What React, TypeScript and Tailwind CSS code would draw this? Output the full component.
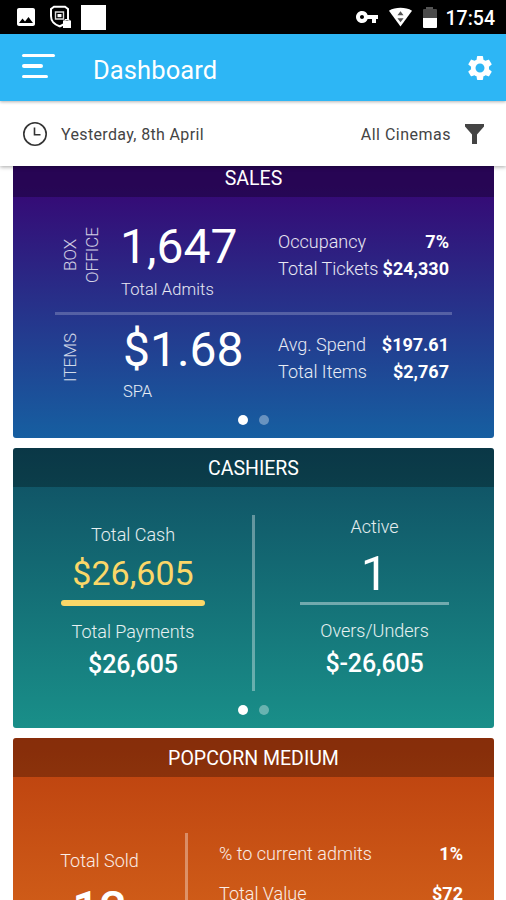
import type { ReactNode } from "react";
import { MdImage, MdSettings, MdVpnKey } from "react-icons/md";

function StatusBar() {
  return (
    <div className="flex h-[34px] shrink-0 items-center justify-between bg-black pl-[14px] pr-[11px] text-white">
      <div className="flex items-center">
        <MdImage className="size-6" />
        <svg className="ml-[10px] size-6" viewBox="0 0 24 24" fill="none" stroke="currentColor" strokeWidth="2">
          <path d="M12 21.500C5 19 3 16 3 11V4l3-2.200h11L20 4v10" />
          <path d="M7.500 7h8v7h-8z" stroke="#ddd" strokeWidth="1.400" />
          <path d="M9.500 9h4v3.200h-4z" fill="#fff" stroke="none" />
          <path d="M11.500 21.500l4-2" />
          <path d="M16 16.500h6V22h-6z" fill="#fff" />
          <path d="M17 16v-1.500h4V16" strokeWidth="1" />
        </svg>
        <div className="ml-[9px] mt-px size-[25px] bg-white" />
      </div>
      <div className="flex items-center">
        <MdVpnKey className="size-6" />
        <svg className="ml-[9px] h-5 w-[25px]" viewBox="0 0 26 20">
          <path d="M1 3.500C8-.5 18-.5 25 3.500L13 20z" fill="#fff" />
          <path d="M13 4l3.200 4.300H9.800zM13 15.500l3.200-4.300H9.800z" fill="#555" />
        </svg>
        <div className="ml-[10px] flex flex-col items-center">
          <div className="h-[2px] w-[7px] bg-[#555]" />
          <div className="h-[9px] w-[14px] rounded-t-[1px] bg-[#4b4b4b]" />
          <div className="h-[10px] w-[14px] rounded-b-[1px] bg-white" />
        </div>
        <span className="ml-[9px] mt-[3px] text-[19.500px] font-medium leading-6">17:54</span>
      </div>
    </div>
  );
}

function AppBar() {
  return (
    <div className="z-20 flex h-[67px] shrink-0 items-center bg-[#2db6f5] pr-[11px] pl-[22px] text-white shadow-[0_1px_3px_rgba(0,0,0,0.3)]">
      <div className="flex w-[33px] flex-col gap-[7px] pb-[3px]">
        <div className="h-[3.500px] w-[33px] rounded-full bg-white" />
        <div className="h-[3.500px] w-[21px] rounded-full bg-white" />
        <div className="h-[3.500px] w-[26px] rounded-full bg-white" />
      </div>
      <h1 className="ml-[38px] mt-[5px] text-[25.500px] leading-8 tracking-[0.100px]">Dashboard</h1>
      <MdSettings className="ml-auto mt-px size-[30px]" />
    </div>
  );
}

function FilterBar() {
  return (
    <div className="z-10 flex h-[65px] shrink-0 items-center bg-white pl-[22px] pr-[22px] text-[#444] shadow-[0_1px_4px_rgba(0,0,0,0.35)]">
      <svg className="size-[26px]" viewBox="0 0 26 26" fill="none" stroke="#333" strokeWidth="1.600">
        <circle cx="13" cy="13" r="11.200" />
        <path d="M12.500 6.500v7.300h6" />
      </svg>
      <span className="ml-[13px] mt-[2px] text-[16px] leading-6 tracking-[0.350px]">Yesterday, 8th April</span>
      <span className="ml-auto mt-[2px] text-[16px] leading-6 tracking-[0.500px]">All Cinemas</span>
      <svg className="ml-[14px] h-5 w-[19px]" viewBox="0 0 19 20">
        <path d="M0 0h19v2.500L12 10.500V20H7v-9.500L0 2.500z" fill="#444" />
      </svg>
    </div>
  );
}

function Card({ title, tone, children }: { title: string; tone: string; children: ReactNode }) {
  return (
    <section className={`flex h-[280px] shrink-0 flex-col overflow-hidden rounded-[3px] text-white ${tone}`}>
      <h2 className="h-[39px] shrink-0 bg-black/28 text-center text-[19.500px] leading-[42px]">{title}</h2>
      {children}
    </section>
  );
}

function Dots() {
  return (
    <div className="flex justify-center gap-[11px]">
      <div className="size-[10px] rounded-full bg-white" />
      <div className="size-[10px] rounded-full bg-white/35" />
    </div>
  );
}

function Stat({ label, value }: { label: string; value: string }) {
  return (
    <div className="flex justify-between whitespace-nowrap text-[18px] leading-[26.500px]">
      <span className="font-light text-white/90">{label}</span>
      <span className="font-bold">{value}</span>
    </div>
  );
}

function SalesCard() {
  return (
    <Card title="SALES" tone="bg-linear-to-b/srgb from-[#360875] from-10% to-[#165fa1]">
      <div className="ml-[42px] mr-[42px] flex h-[115px] shrink-0">
        <div className="flex w-[67px] items-center pl-1">
          <div className="rotate-180 text-center text-[17px] font-light leading-[22px] text-white/80 [writing-mode:vertical-rl]">
            BOX
            <br />
            OFFICE
          </div>
        </div>
        <div className="w-[156px] pt-[24px]">
          <div className="-ml-[2px] text-[48px] leading-[52px]">1,647</div>
          <div className="-ml-px mt-[5px] text-[16.500px] font-light leading-6 tracking-[0.100px] text-white/90">Total Admits</div>
        </div>
        <div className="w-[171px] pt-[32px]">
          <Stat label="Occupancy" value="7%" />
          <Stat label="Total Tickets" value="$24,330" />
        </div>
      </div>
      <div className="ml-[42px] mr-[42px] h-[3px] shrink-0 bg-white/22" />
      <div className="ml-[42px] mr-[42px] flex h-[100px] shrink-0">
        <div className="flex w-[67px] items-start pl-1 pt-[18px]">
          <div className="rotate-180 text-[17px] font-light leading-[22px] text-white/80 [writing-mode:vertical-rl]">ITEMS</div>
        </div>
        <div className="w-[156px] pt-[10px]">
          <div className="ml-px text-[48px] leading-[50px]">$1.68</div>
          <div className="ml-px mt-[5px] text-[16.500px] font-light leading-6 text-white/90">SPA</div>
        </div>
        <div className="w-[171px] pt-[17px]">
          <Stat label="Avg. Spend" value="$197.61" />
          <Stat label="Total Items" value="$2,767" />
        </div>
      </div>
      <Dots />
    </Card>
  );
}

function CashiersCard() {
  return (
    <Card title="CASHIERS" tone="bg-linear-to-b/srgb from-[#0f4d62] to-[#198f89]">
      <div className="ml-px flex h-[218px] shrink-0 pt-[28px] text-center">
        <div className="flex w-[238px] flex-col items-center pt-[8px]">
          <div className="text-[18px] font-light leading-6 text-white/90">Total Cash</div>
          <div className="mt-[6px] text-[34px] leading-10 text-[#fbd768]">$26,605</div>
          <div className="mt-[7px] h-[6px] w-[144px] rounded-full bg-[#fbd768]" />
          <div className="mt-[14px] text-[18px] font-light leading-6 text-white/90">Total Payments</div>
          <div className="mt-[6px] text-[25px] font-medium leading-[30px] tracking-[-0.150px]">$26,605</div>
        </div>
        <div className="h-[176px] w-[3px] bg-white/35" />
        <div className="flex w-[239px] flex-col items-center">
          <div className="text-[18px] font-light leading-6 text-white/90">Active</div>
          <div className="mt-[9px] text-[49px] leading-[52px]">1</div>
          <div className="mt-[2px] h-[3px] w-[149px] bg-white/40" />
          <div className="mt-[14px] text-[18px] font-light leading-6 text-white/90">Overs/Unders</div>
          <div className="mt-[6px] text-[25px] font-medium leading-[30px] tracking-[-0.150px]">$-26,605</div>
        </div>
      </div>
      <Dots />
    </Card>
  );
}

function PopcornCard() {
  return (
    <Card title="POPCORN MEDIUM" tone="bg-linear-to-b/srgb from-[#bb3f0e] to-[#dc6f1f]">
      <div className="ml-px flex pt-[56px]">
        <div className="flex w-[171px] flex-col items-center pt-[16px]">
          <div className="text-[18px] font-light leading-6 text-white/90">Total Sold</div>
          <div className="mt-[11px] text-[48px] font-medium leading-[50px]">12</div>
        </div>
        <div className="h-[147px] w-[3px] bg-white/35" />
        <div className="ml-[31px] flex w-[244px] flex-col gap-[13.500px] pt-[8px]">
          <Stat label="% to current admits" value="1%" />
          <Stat label="Total Value" value="$72" />
        </div>
      </div>
    </Card>
  );
}

export default function App() {
  return (
    <div className="flex h-[900px] w-[506px] flex-col overflow-hidden bg-white font-['Roboto',sans-serif]">
      <StatusBar />
      <AppBar />
      <FilterBar />
      <main className="min-h-0 flex-1 overflow-hidden">
        <div className="-mt-[8px] ml-[13px] mr-[12px] flex flex-col gap-[10px]">
          <SalesCard />
          <CashiersCard />
          <PopcornCard />
        </div>
      </main>
    </div>
  );
}
